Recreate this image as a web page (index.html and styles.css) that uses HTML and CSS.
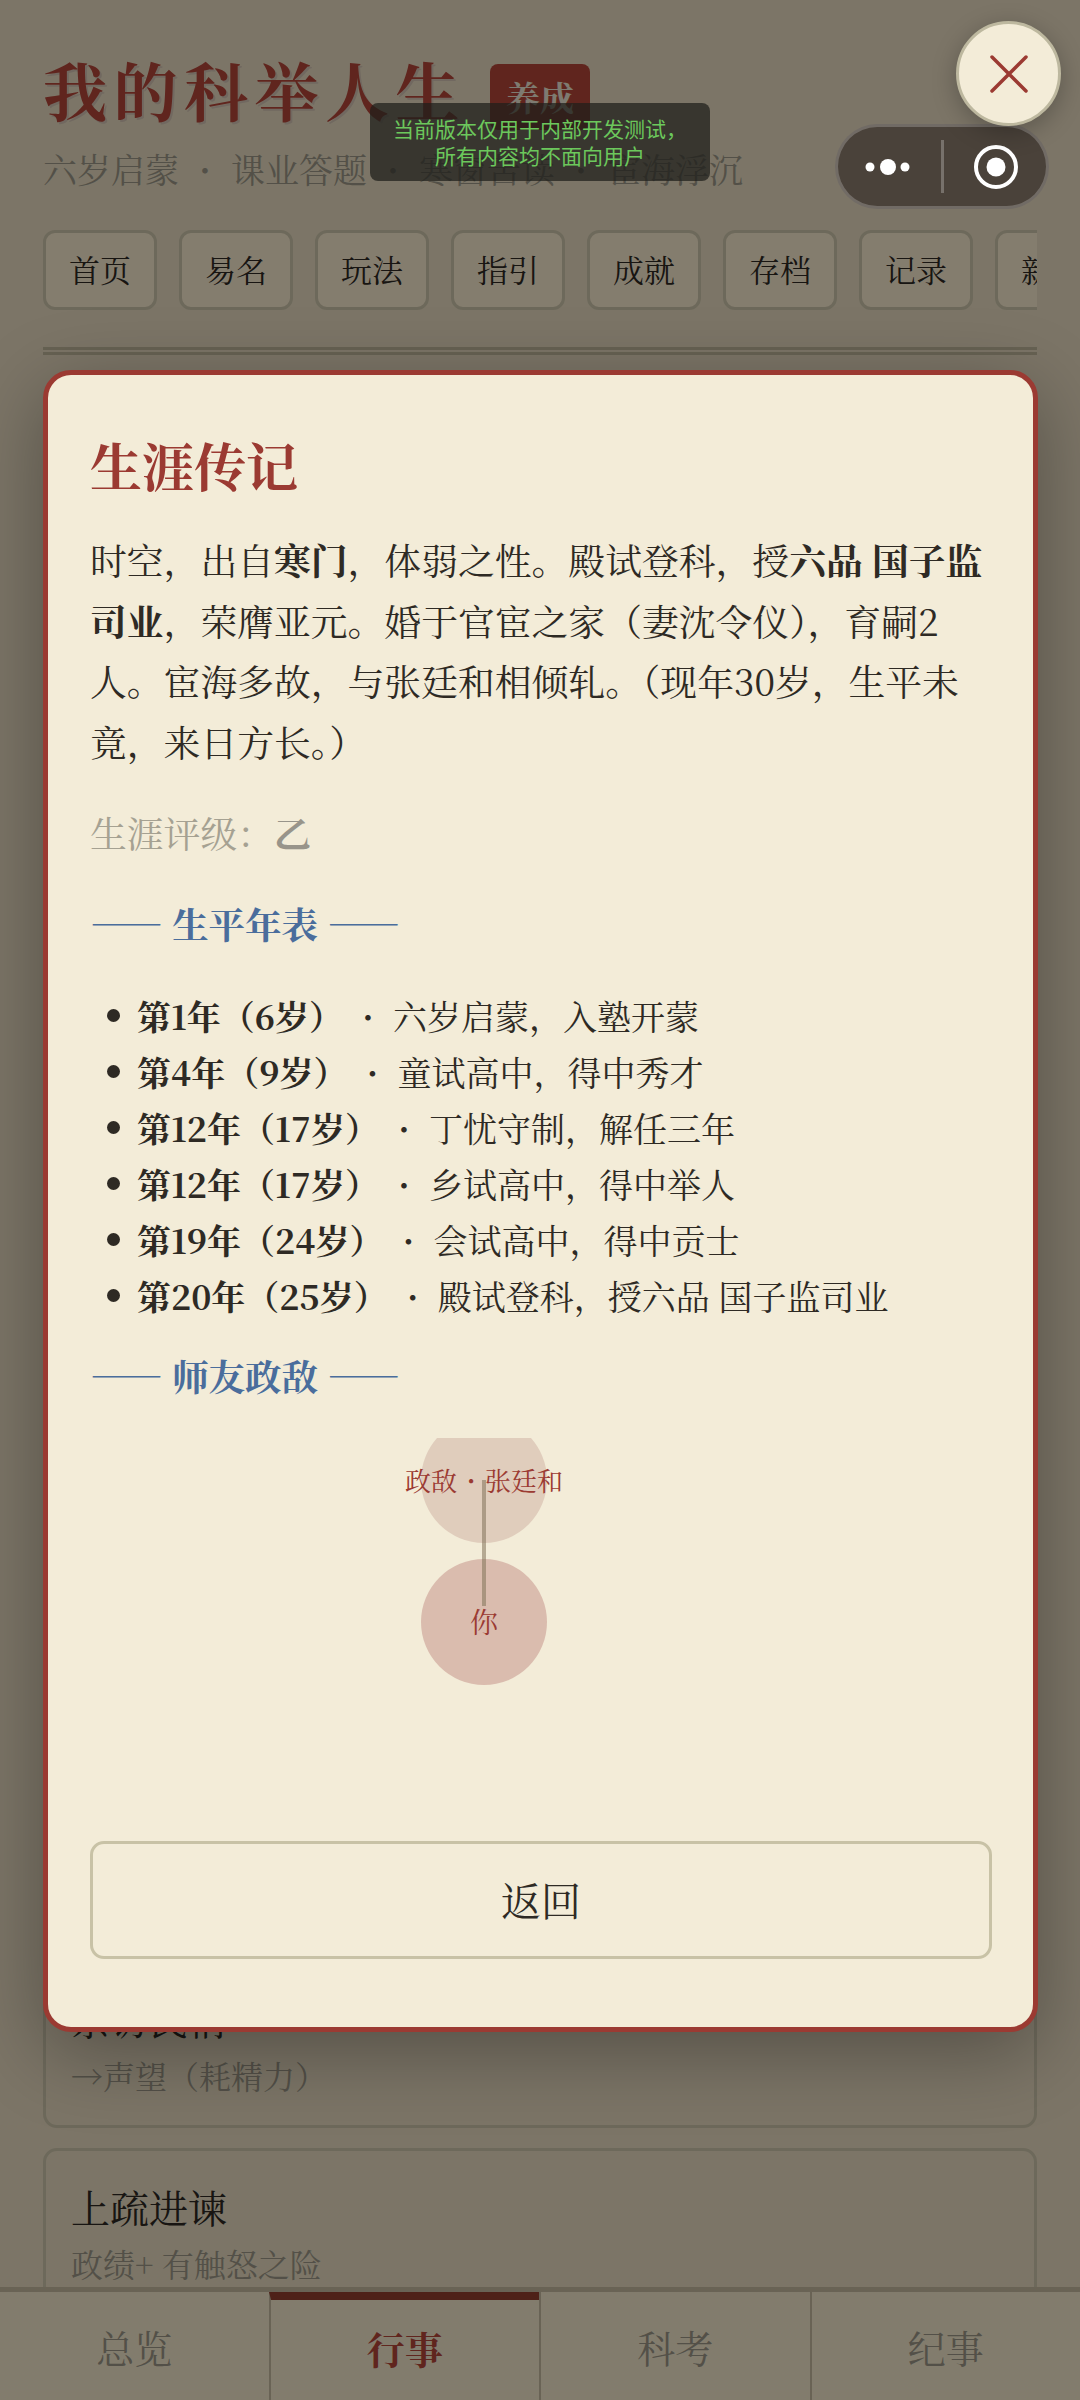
FILE: index.html
```html
<!DOCTYPE html>
<html lang="zh">
<head>
  <meta charset="UTF-8">
  <meta name="viewport" content="width=device-width, initial-scale=1.0">
  <title>我的科举人生</title>
  <link rel="stylesheet" href="styles.css">
</head>
<body>
  <div class="page">
    <header class="page-head">
      <div class="title-row">
        <h1>我的科举人生</h1>
        <span class="badge">养成</span>
      </div>
      <p class="subtitle">六岁启蒙<span class="dot">·</span>课业答题<span class="dot">·</span>寒窗苦读<span class="dot">·</span>宦海浮沉</p>
    </header>

    <nav class="tabs">
      <div class="tab">首页</div>
      <div class="tab">易名</div>
      <div class="tab">玩法</div>
      <div class="tab">指引</div>
      <div class="tab">成就</div>
      <div class="tab">存档</div>
      <div class="tab">记录</div>
      <div class="tab">新闻</div>
    </nav>
    <div class="double-rule"></div>

    <div class="action-list">
      <div class="action-card">
        <div class="action-name">亲访民情</div>
        <div class="action-desc">→声望（耗精力）</div>
      </div>
      <div class="action-card">
        <div class="action-name">上疏进谏</div>
        <div class="action-desc">政绩+ 有触怒之险</div>
      </div>
    </div>

    <nav class="bottom-nav">
      <div class="bottom-tab">总览</div>
      <div class="bottom-tab active">行事</div>
      <div class="bottom-tab">科考</div>
      <div class="bottom-tab">纪事</div>
    </nav>
  </div>

  <div class="mask"></div>

  <div class="dev-toast">当前版本仅用于内部开发测试，<br>所有内容均不面向用户</div>

  <div class="capsule">
    <svg class="capsule-dots" width="52" height="20" viewBox="0 0 52 20">
      <circle cx="8" cy="10" r="4.5" fill="#fff"/>
      <circle cx="26" cy="10" r="8" fill="#fff"/>
      <circle cx="43" cy="10" r="4.5" fill="#fff"/>
    </svg>
    <span class="capsule-line"></span>
    <svg class="capsule-target" width="46" height="46" viewBox="0 0 46 46">
      <circle cx="23" cy="23" r="20" fill="none" stroke="#fff" stroke-width="4"/>
      <circle cx="23" cy="23" r="9.5" fill="#fff"/>
    </svg>
  </div>

  <div class="modal">
    <h2 class="modal-title">生涯传记</h2>
    <p class="bio">时空，出自<b>寒门</b>，体弱之性。殿试登科，授<b>六品 国子监司业</b>，荣膺亚元。婚于官宦之家（妻沈令仪），育嗣2人。宦海多故，与张廷和相倾轧。（现年30岁，生平未竟，来日方长。）</p>
    <p class="rating">生涯评级：<span class="rating-value">乙</span></p>

    <h3 class="section-head"><span class="dash">——</span> 生平年表 <span class="dash">——</span></h3>
    <ul class="timeline">
      <li><b>第1年（6岁）</b><span class="dot">·</span>六岁启蒙，入塾开蒙</li>
      <li><b>第4年（9岁）</b><span class="dot">·</span>童试高中，得中秀才</li>
      <li><b>第12年（17岁）</b><span class="dot">·</span>丁忧守制，解任三年</li>
      <li><b>第12年（17岁）</b><span class="dot">·</span>乡试高中，得中举人</li>
      <li><b>第19年（24岁）</b><span class="dot">·</span>会试高中，得中贡士</li>
      <li><b>第20年（25岁）</b><span class="dot">·</span>殿试登科，授六品 国子监司业</li>
    </ul>

    <h3 class="section-head second"><span class="dash">——</span> 师友政敌 <span class="dash">——</span></h3>
    <div class="relation-graph">
      <span class="node node-rival"></span>
      <span class="node node-self"></span>
      <span class="link"></span>
      <span class="node-label rival-label">政敌<span class="label-dot">·</span>张廷和</span>
      <span class="node-label self-label">你</span>
    </div>

    <button class="back-btn">返回</button>
  </div>

  <button class="close-btn">
    <svg width="38" height="38" viewBox="0 0 38 38">
      <path d="M2 2 L36 36 M36 2 L2 36" stroke="#9b3a32" stroke-width="3.5" stroke-linecap="round" fill="none"/>
    </svg>
  </button>
</body>
</html>
```

FILE: styles.css
```css
* { box-sizing: border-box; }
body {
  margin: 0;
  width: 1080px;
  height: 2400px;
  overflow: hidden;
  position: relative;
  font-family: 'Noto Serif CJK SC', 'Liberation Serif', 'Noto Sans CJK SC', serif;
  background-color: #ede1c6;
  color: #2e2a24;
}
.page {
  height: 2400px;
  padding: 0 43px;
  position: relative;
  background: #ede1c6;
}
.dot {
  display: inline-block;
  width: 50px;
  text-align: center;
  font-weight: 700;
}

/* 顶部标题 */
.page-head { padding-top: 52px; }
.title-row {
  display: flex;
  align-items: center;
  height: 72px;
}
h1 {
  margin: 0;
  font-size: 64px;
  line-height: 72px;
  letter-spacing: 6.5px;
  font-weight: 700;
  color: #b8483a;
  text-shadow: 2px 2px 0 #d8c8b8;
}
.badge {
  margin-left: 24px;
  margin-top: 18px;
  width: 100px;
  height: 66px;
  border-radius: 8px;
  background: #b8483a;
  color: #f2ebd9;
  font-size: 34px;
  font-weight: 700;
  text-align: center;
  line-height: 66px;
}
.subtitle {
  margin: 22px 0 0;
  font-size: 34px;
  line-height: 46px;
  color: #a09a8a;
  white-space: nowrap;
}
.subtitle .dot { width: 52px; }

/* 顶部标签 */
.tabs {
  display: flex;
  gap: 22px;
  margin-top: 38px;
  overflow: hidden;
}
.tab {
  flex: 0 0 114px;
  height: 80px;
  line-height: 72px;
  text-align: center;
  font-size: 31px;
  border: 3px solid #d2c9ae;
  border-radius: 12px;
  background: #fef0d4;
}
.double-rule {
  margin-top: 37px;
  height: 8px;
  border-top: 3px solid #c6bca0;
  border-bottom: 3px solid #c6bca0;
}

/* 行事列表 */
.action-list {
  display: flex;
  flex-direction: column;
  gap: 20px;
  margin-top: 1605px;
}
.action-card {
  height: 168px;
  padding: 27px 25px;
  border: 3px solid #d2c9ae;
  border-radius: 14px;
}
.action-name {
  font-size: 39px;
  line-height: 56px;
}
.action-desc {
  margin-top: 3px;
  font-size: 32px;
  line-height: 52px;
  color: #a09a8a;
}

/* 底部导航 */
.bottom-nav {
  position: absolute;
  left: 0;
  right: 0;
  bottom: 0;
  height: 113px;
  display: flex;
  background: #faeed2;
  border-top: 5px solid #cabfa3;
}
.bottom-tab {
  flex: 1;
  text-align: center;
  font-size: 38px;
  line-height: 110px;
  color: #a09a8a;
  border-left: 2px solid #cabfa3;
}
.bottom-tab:first-child { border-left: none; }
.bottom-tab.active {
  color: #b8483a;
  font-weight: 700;
  border-top: 8px solid #96402f;
  line-height: 96px;
}

/* 遮罩 */
.mask {
  position: absolute;
  top: 0;
  left: 0;
  width: 1080px;
  height: 2400px;
  background: rgba(0, 0, 0, 0.48);
}

/* 开发版提示 */
.dev-toast {
  position: absolute;
  left: 370px;
  top: 103px;
  width: 340px;
  height: 78px;
  padding-top: 12px;
  border-radius: 8px;
  background: rgba(30, 30, 26, 0.72);
  color: #6cc85c;
  font-family: 'Noto Sans CJK SC', sans-serif;
  font-size: 21px;
  line-height: 27px;
  text-align: center;
}

/* 小程序胶囊 */
.capsule {
  position: absolute;
  left: 835px;
  top: 124px;
  width: 214px;
  height: 85px;
  display: flex;
  align-items: center;
  border: 3px solid rgba(255, 255, 255, 0.22);
  border-radius: 43px;
  background: #4a423a;
}
.capsule-dots { margin-left: 24px; }
.capsule-line {
  margin-left: 27px;
  width: 3px;
  height: 53px;
  background: rgba(255, 255, 255, 0.25);
}
.capsule-target { margin-left: 29px; }

/* 传记弹窗 */
.modal {
  position: absolute;
  left: 43px;
  top: 370px;
  width: 995px;
  height: 1662px;
  padding: 54px 42px 0;
  border: 5px solid #9b3a32;
  border-radius: 28px;
  background: #f3ecd8;
  box-shadow: 0 20px 80px rgba(0, 0, 0, 0.32);
}
.modal-title {
  margin: 0;
  font-size: 52px;
  line-height: 72px;
  font-weight: 700;
  color: #9b3a32;
}
.bio {
  margin: 29px 0 0;
  font-size: 36.8px;
  line-height: 60.5px;
}
.rating {
  margin: 31px 0 0;
  font-size: 36.8px;
  line-height: 60px;
  color: #a5a192;
}
.rating-value {
  font-weight: 700;
  color: #98948a;
}
.section-head {
  margin: 30px 0 0;
  font-size: 36.5px;
  line-height: 60px;
  font-weight: 700;
  color: #4a6d9c;
}
.section-head.second { margin-top: 21px; }
.dash { font-size: 36.5px; }
.timeline {
  margin: 35px 0 0;
  padding: 0 0 0 47px;
  list-style: none;
  font-size: 34px;
  line-height: 56px;
}
.timeline li { position: relative; }
.timeline li::before {
  content: '';
  position: absolute;
  left: -30px;
  top: 21px;
  width: 13px;
  height: 13px;
  border-radius: 50%;
  background: #2e2a24;
}
.relation-graph {
  position: relative;
  height: 360px;
  margin-top: 33px;
  overflow: hidden;
}
.node {
  position: absolute;
  left: 331px;
  width: 126px;
  height: 126px;
  border-radius: 50%;
}
.node-rival {
  top: -21px;
  background: #e0cdbc;
}
.node-self {
  top: 121px;
  background: #dabcae;
}
.link {
  position: absolute;
  left: 392px;
  top: 42px;
  width: 4px;
  height: 126px;
  background: rgba(130, 115, 90, 0.55);
}
.node-label {
  position: absolute;
  left: 194px;
  width: 400px;
  text-align: center;
  font-size: 26px;
  line-height: 34px;
  color: #9b3a32;
}
.label-dot {
  display: inline-block;
  width: 28px;
  text-align: center;
  font-weight: 700;
}
.rival-label { top: 25px; }
.self-label {
  top: 166px;
  font-size: 28px;
}
.back-btn {
  display: block;
  width: 902px;
  height: 118px;
  margin-top: 43px;
  padding-bottom: 5px;
  border: 3px solid #c8c2a6;
  border-radius: 14px;
  background: #f3ecd8;
  font-family: inherit;
  font-size: 40px;
  color: #2e2a24;
}

/* 关闭按钮 */
.close-btn {
  position: absolute;
  left: 956px;
  top: 21px;
  width: 105px;
  height: 105px;
  display: flex;
  align-items: center;
  justify-content: center;
  padding: 0;
  border: 3px solid #bdb89f;
  border-radius: 50%;
  background: #f3ecd8;
  box-shadow: 0 6px 24px rgba(0, 0, 0, 0.25);
}
```
